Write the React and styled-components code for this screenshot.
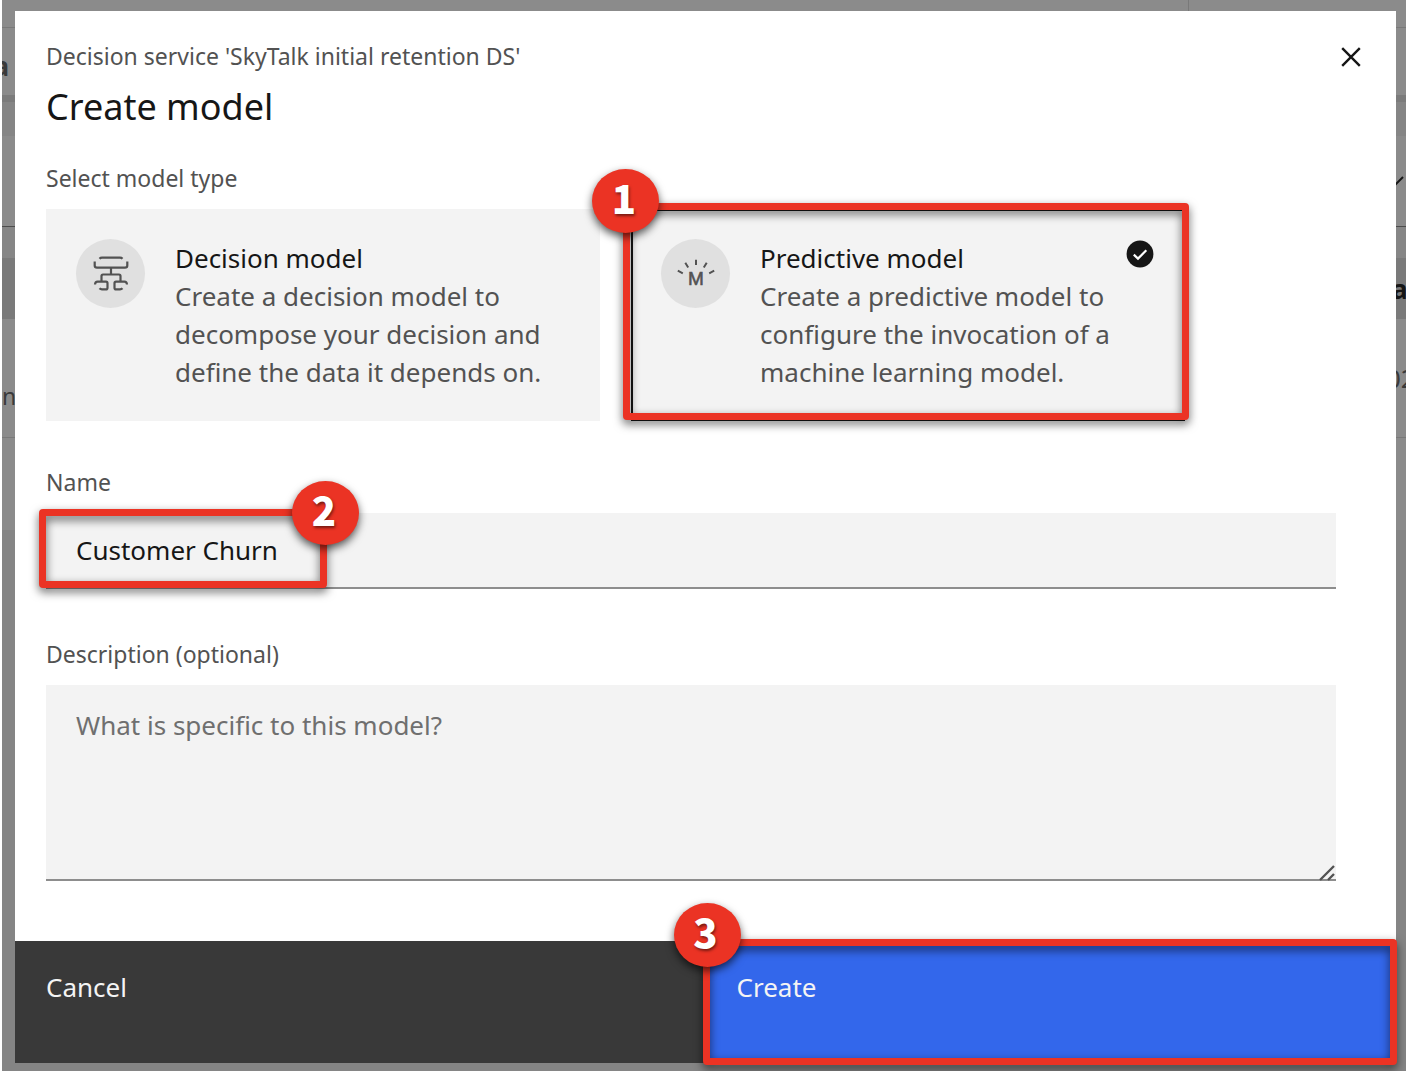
import React, { useState } from "react";
import styled, { createGlobalStyle, css } from "styled-components";

const GlobalStyle = createGlobalStyle`
  *, *::before, *::after { box-sizing: border-box; }
  body {
    margin: 0;
    background: #ffffff;
    color: #161616;
    font-family: "Noto Sans", "Open Sans", sans-serif;
  }
  button, input, textarea { font: inherit; }
`;

/* The backdrop page and the dialog share one grid cell, the dialog on top. */
const Stage = styled.div`
  display: grid;
  margin-left: 2px;
  overflow: hidden;
`;

const Backdrop = styled.div`
  grid-area: 1 / 1;
  display: flex;
  flex-direction: column;
  min-width: 0;
  background: #858585;
`;

const Band = styled.div`
  display: flex;
  justify-content: space-between;
  align-items: center;
  height: ${(p) => p.$height}px;
  padding-top: ${(p) => p.$offset || 0}px;
  background: ${(p) => p.$tone || "#8b8b8b"};
  border-bottom: ${(p) => (p.$line ? `1px solid ${p.$line}` : "0")};
  color: #3a3a3a;
  font-size: 26px;
  font-weight: ${(p) => (p.$bold ? 700 : 400)};
  white-space: nowrap;
`;

const Edge = styled.span`
  display: flex;
  justify-content: ${(p) => (p.$end ? "flex-end" : "flex-start")};
  width: ${(p) => p.$width}px;
  color: ${(p) => (p.$dark ? "#161616" : "#3a3a3a")};
`;

const LowerText = styled.span`
  padding-top: 36px;
  font-size: 23px;
`;

const Divider = styled.span`
  width: 1px;
  height: 100%;
  margin-left: auto;
  margin-right: 217px;
  background: #797979;
`;

const Dialog = styled.form`
  grid-area: 1 / 1;
  z-index: 1;
  display: flex;
  flex-direction: column;
  margin: 11px 10px 8px 13px;
  min-width: 0;
  background: #ffffff;
`;

const Header = styled.header`
  display: flex;
  justify-content: space-between;
  align-items: flex-start;
  padding: 30px 30px 0 31px;
`;

const Context = styled.p`
  margin: 0;
  color: #525252;
  font-size: 23px;
  line-height: 31px;
`;

const Title = styled.h1`
  margin: 10px 0 0;
  font-size: 36px;
  font-weight: 400;
  line-height: 50px;
`;

const CloseButton = styled.button`
  display: flex;
  padding: 5px;
  border: 0;
  background: none;
  color: #161616;
  cursor: pointer;
`;

const Body = styled.div`
  padding: 31px 60px 60px 31px;
`;

const ModelTypes = styled.fieldset`
  margin: 0;
  padding: 0;
  border: 0;
`;

const labelText = css`
  display: block;
  padding: 0;
  margin-bottom: 15px;
  color: #525252;
  font-size: 23px;
  line-height: 31px;
`;

const Legend = styled.legend`
  ${labelText}
`;

const FieldLabel = styled.label`
  ${labelText}
`;

const Tiles = styled.div`
  display: grid;
  grid-template-columns: 1fr 1fr;
  gap: 31px;
  padding-right: 151px;
`;

const TileWrap = styled.div`
  position: relative;
  display: grid;
`;

const Tile = styled.label`
  position: relative;
  display: flex;
  gap: 30px;
  padding: 30px;
  background: #f3f3f3;
  box-shadow: ${(p) => (p.$selected ? "inset 0 0 0 2px #161616" : "none")};
  font-size: 26px;
  line-height: 38px;
  cursor: pointer;
`;

const TileRadio = styled.input`
  position: absolute;
  inset: 0;
  margin: 0;
  opacity: 0;
`;

const TileIcon = styled.span`
  display: flex;
  flex: none;
  align-items: center;
  justify-content: center;
  width: 69px;
  height: 69px;
  border-radius: 50%;
  background: #e0e0e0;
  color: #525252;
`;

const TileTitle = styled.span`
  display: block;
  color: #161616;
`;

const TileText = styled.span`
  display: block;
  color: #525252;
`;

const TileCheck = styled.span`
  position: absolute;
  top: 31px;
  right: 31px;
  display: flex;
`;

const Field = styled.div`
  margin-top: ${(p) => p.$gap}px;
`;

const Control = styled.div`
  position: relative;
  display: flex;
`;

const controlStyle = css`
  width: 100%;
  border: 0;
  border-bottom: 2px solid #8d8d8d;
  border-radius: 0;
  background: #f3f3f3;
  color: #161616;
  font-size: 26px;
  line-height: 38px;
  outline: none;
  &::placeholder { color: #6f6f6f; opacity: 1; }
`;

const TextInput = styled.input`
  ${controlStyle}
  height: 76px;
  padding: 0 30px;
`;

const TextArea = styled.textarea`
  ${controlStyle}
  height: 196px;
  padding: 21px 30px;
  resize: none;
`;

const ResizeGrip = styled.svg`
  position: absolute;
  right: 0;
  bottom: 0;
`;

const Footer = styled.footer`
  display: grid;
  grid-template-columns: 1fr 1fr;
`;

const ActionCell = styled.div`
  position: relative;
  display: grid;
`;

const ActionButton = styled.button`
  height: 122px;
  padding: 27px 31px;
  border: 0;
  display: flex;
  align-items: flex-start;
  background: ${(p) => (p.$primary ? "#3367eb" : "#393939")};
  color: #f4f4f4;
  font-size: 26px;
  line-height: 38px;
  cursor: pointer;
`;

/* Numbered call-outs drawn over the controls they refer to. */
const Highlight = styled.div`
  position: absolute;
  inset: ${(p) => p.$inset};
  width: ${(p) => p.$width || "auto"};
  border: 7px solid #eb3324;
  border-radius: 4px;
  filter: drop-shadow(0 4px 5px rgba(0, 0, 0, 0.6));
  pointer-events: none;
`;

const StepBadge = styled.span`
  position: absolute;
  top: ${(p) => p.$top}px;
  left: ${(p) => p.$left}px;
  display: flex;
  align-items: center;
  justify-content: center;
  width: 67px;
  height: 64px;
  padding: 0 3px 8px 0;
  border-radius: 50%;
  background: #eb3324;
  box-shadow: 0 4px 9px rgba(0, 0, 0, 0.65);
  color: #ffffff;
  font-family: "Noto Sans CJK SC", "Noto Sans", sans-serif;
  font-size: 40px;
  font-weight: 900;
  line-height: 56px;
  text-shadow: 1px 2px 3px rgba(0, 0, 0, 0.5);
  pointer-events: none;
`;

function DecisionIcon() {
  return (
    <svg width="36" height="36" viewBox="0 0 36 36" fill="none" stroke="currentColor" strokeWidth="2.200" aria-hidden="true">
      <path d="M6.500 2.800Q7.500 1.700 9 1.700H27Q28.500 1.700 29.500 2.800" />
      <path d="M1.700 5.500V9.500Q1.700 11.700 4 11.700H32Q34.300 11.700 34.300 9.500V5.500" />
      <path d="M18 11.700V18.500M8.500 25.500V20Q8.500 18.500 10 18.500H26Q27.500 18.500 27.500 20V25.500" />
      <path d="M2 28.500Q2.200 25.700 4.500 25.700H13Q14.500 25.700 14.500 27.200V31.700Q14.500 33.400 13 33.400H9Q7.500 33.400 6.500 32.300" />
      <path d="M34 28.500Q33.800 25.700 31.500 25.700H23Q21.500 25.700 21.500 27.200V31.700Q21.500 33.400 23 33.400H27Q28.500 33.400 29.500 32.300" />
    </svg>
  );
}

const IconLetter = styled.text`
  font-family: "Liberation Sans", sans-serif;
  font-size: 19px;
  fill: currentColor;
  stroke: currentColor;
  stroke-width: 0.6px;
`;

function PredictiveIcon() {
  return (
    <svg width="40" height="40" viewBox="0 0 40 40" fill="none" stroke="currentColor" strokeWidth="2" aria-hidden="true">
      <path d="M20 5.700V10.900M9.300 8.700L12.200 13.500M30.700 8.700L27.800 13.500M1.800 16.700L6.800 19.300M38.200 16.700L33.200 19.300" />
      <IconLetter x="20" y="31" textAnchor="middle">M</IconLetter>
    </svg>
  );
}

function CheckIcon() {
  return (
    <svg width="28" height="28" viewBox="0 0 28 28" aria-hidden="true">
      <circle cx="14" cy="14" r="13.400" fill="#161616" />
      <path d="M7.800 14.600L12 18.600L20.300 10.300" fill="none" stroke="#ffffff" strokeWidth="2.200" />
    </svg>
  );
}

const MODEL_TYPES = [
  {
    id: "decision",
    title: "Decision model",
    text: "Create a decision model to decompose your decision and define the data it depends on.",
    Icon: DecisionIcon,
  },
  {
    id: "predictive",
    title: "Predictive model",
    text: "Create a predictive model to configure the invocation of a machine learning model.",
    Icon: PredictiveIcon,
    step: 1,
  },
];

function PageBehind() {
  return (
    <Backdrop aria-hidden="true">
      <Band $height={28} $line="#797979"><Divider /></Band>
      <Band $height={67} $offset={8} $bold><Edge $width={7} $end>a</Edge></Band>
      <Band $height={7} $tone="#7b7b7b" />
      <Band $height={34} $tone="#858585" />
      <Band $height={91} $line="#4c4c4c">
        <Edge $width={1} />
        <Edge $width={12}>
          <svg width="12" height="12" viewBox="0 0 12 12" fill="none" stroke="#161616" strokeWidth="2">
            <path d="M1 10L9 2" />
          </svg>
        </Edge>
      </Band>
      <Band $height={31} $tone="#868686" />
      <Band $height={61} $tone="#7a7a7a" $bold>
        <Edge $width={1} />
        <Edge $width={14} $dark>at</Edge>
      </Band>
      <Band $height={119} $line="#797979">
        <Edge $width={14}><LowerText>ne</LowerText></Edge>
        <Edge $width={20}>02</Edge>
      </Band>
      <Band $height={92} />
    </Backdrop>
  );
}

export default function App() {
  const [type, setType] = useState("predictive");
  const [name, setName] = useState("Customer Churn");
  const [description, setDescription] = useState("");

  return (
    <>
      <GlobalStyle />
      <Stage>
        <PageBehind />
        <Dialog role="dialog" aria-labelledby="dialog-title" onSubmit={(e) => e.preventDefault()}>
          <Header>
            <div>
              <Context>Decision service 'SkyTalk initial retention DS'</Context>
              <Title id="dialog-title">Create model</Title>
            </div>
            <CloseButton type="button" aria-label="Close">
              <svg width="20" height="22" viewBox="0 0 20 22" fill="none" stroke="currentColor" strokeWidth="2.400" aria-hidden="true">
                <path d="M1.200 2.200L18.800 19.800M18.800 2.200L1.200 19.800" />
              </svg>
            </CloseButton>
          </Header>

          <Body>
            <ModelTypes>
              <Legend>Select model type</Legend>
              <Tiles>
                {MODEL_TYPES.map(({ id, title, text, Icon, step }) => (
                  <TileWrap key={id}>
                    <Tile $selected={type === id}>
                      <TileRadio
                        type="radio"
                        name="model-type"
                        value={id}
                        checked={type === id}
                        onChange={() => setType(id)}
                      />
                      <TileIcon><Icon /></TileIcon>
                      <span>
                        <TileTitle>{title}</TileTitle>
                        <TileText>{text}</TileText>
                      </span>
                      {type === id && <TileCheck><CheckIcon /></TileCheck>}
                    </Tile>
                    {step && (
                      <>
                        <Highlight $inset="-6px -4px 1px -8px" />
                        <StepBadge $top={-40} $left={-39}>{step}</StepBadge>
                      </>
                    )}
                  </TileWrap>
                ))}
              </Tiles>
            </ModelTypes>

            <Field $gap={46}>
              <FieldLabel htmlFor="model-name">Name</FieldLabel>
              <Control>
                <TextInput id="model-name" value={name} onChange={(e) => setName(e.target.value)} />
                <Highlight $inset="-4px auto 1px -7px" $width="288px" />
                <StepBadge $top={-32} $left={246}>2</StepBadge>
              </Control>
            </Field>

            <Field $gap={50}>
              <FieldLabel htmlFor="model-description">Description (optional)</FieldLabel>
              <Control>
                <TextArea
                  id="model-description"
                  placeholder="What is specific to this model?"
                  value={description}
                  onChange={(e) => setDescription(e.target.value)}
                />
                <ResizeGrip width="18" height="18" viewBox="0 0 18 18" fill="none" stroke="#525252" strokeWidth="2.400" aria-hidden="true">
                  <path d="M2 17L16 3M10 17L16 11" />
                </ResizeGrip>
              </Control>
            </Field>
          </Body>

          <Footer>
            <ActionCell>
              <ActionButton type="button">Cancel</ActionButton>
            </ActionCell>
            <ActionCell>
              <ActionButton type="submit" $primary>Create</ActionButton>
              <Highlight $inset="-2px -1px -2px -3px" />
              <StepBadge $top={-38} $left={-32}>3</StepBadge>
            </ActionCell>
          </Footer>
        </Dialog>
      </Stage>
    </>
  );
}
